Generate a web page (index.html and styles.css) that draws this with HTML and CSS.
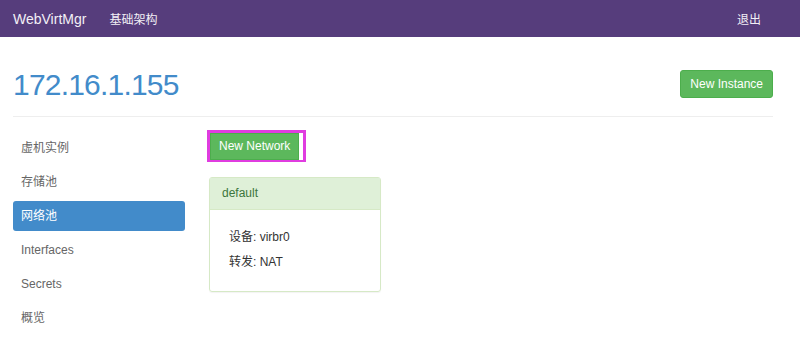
FILE: index.html
```html
<!DOCTYPE html>
<html lang="zh-CN">

<head>
    <meta charset="UTF-8">
    <meta name="viewport" content="width=device-width, initial-scale=1.0">
    <title>WebVirtMgr</title>
    <link rel="stylesheet" href="styles.css">
</head>

<body>
    <div class="navbar">
        <div class="navbar-inner">
            <a class="brand" href="javascript:;">WebVirtMgr</a>
            <a class="nav-link" href="javascript:;">基础架构</a>
            <a class="nav-link nav-right" href="javascript:;">退出</a>
        </div>
    </div>

    <div class="container">
        <div class="page-header">
            <h1>172.16.1.155</h1>
            <a class="btn btn-success" href="javascript:;">New Instance</a>
        </div>

        <div class="row">
            <ul class="side-nav">
                <li><a href="javascript:;">虚机实例</a></li>
                <li><a href="javascript:;">存储池</a></li>
                <li class="active"><a href="javascript:;">网络池</a></li>
                <li><a href="javascript:;">Interfaces</a></li>
                <li><a href="javascript:;">Secrets</a></li>
                <li><a href="javascript:;">概览</a></li>
            </ul>

            <div class="main">
                <div class="highlight">
                    <a class="btn btn-success btn-sm" href="javascript:;">New Network</a>
                </div>
                <div class="panel">
                    <div class="panel-heading">default</div>
                    <div class="panel-body">
                        <p>设备: virbr0</p>
                        <p>转发: NAT</p>
                    </div>
                </div>
            </div>
        </div>
    </div>
</body>

</html>
```

FILE: styles.css
```css
body {
    margin: 0;
    font-family: "Liberation Sans", Arial, "Noto Sans CJK SC", sans-serif;
    font-size: 12px;
    color: #333;
    background: #fff;
}

ul,
li,
p,
h1 {
    margin: 0;
    padding: 0;
}

a {
    text-decoration: none;
}

/* 顶部导航 */
.navbar {
    height: 37px;
    background: #563d7c;
}

.navbar-inner {
    display: flex;
    align-items: center;
    height: 100%;
    padding: 0 39px 0 13px;
    font-size: 14px;
}

.navbar-inner a {
    color: #f2eff6;
}

.brand {
    margin-right: 23px;
}

.nav-link {
    font-size: 12px;
}

.nav-right {
    margin-left: auto;
}

/* 内容区 */
.container {
    width: 760px;
    margin-left: 13px;
}

.page-header {
    display: flex;
    align-items: center;
    justify-content: space-between;
    height: 78px;
    margin-top: 1px;
    border-bottom: 1px solid #eeeeee;
}

.page-header h1 {
    font-size: 30px;
    font-weight: normal;
    letter-spacing: -0.8px;
    color: #428bca;
    margin-top: 15px;
}

.page-header .btn {
    height: 28px;
    line-height: 26px;
    padding: 0 9px;
    margin-top: 14px;
}

.btn {
    display: inline-block;
    box-sizing: border-box;
    border: 1px solid #4cae4c;
    border-radius: 3px;
    background: #5cb85c;
    color: #fff;
    font-size: 12px;
}

.btn-sm {
    height: 26px;
    line-height: 24px;
    padding: 0 8px;
    border-radius: 0;
}

.row {
    display: flex;
    gap: 22px;
    margin-top: 13px;
}

.side-nav {
    list-style: none;
    width: 172px;
    margin-top: 3px;
}

.side-nav li {
    margin-bottom: 4px;
}

.side-nav a {
    display: block;
    height: 30px;
    line-height: 30px;
    padding: 0 8px;
    border-radius: 3px;
    color: #666;
    font-size: 12px;
}

.side-nav .active a {
    background: #428bca;
    color: #fff;
}

.main {
    flex: 1;
}

.highlight {
    display: inline-flex;
    border: 3px solid #e03ce0;
    border-bottom-width: 2px;
    padding-right: 4px;
    height: 27px;
}

.highlight .btn {
    height: 27px;
    line-height: 25px;
    padding: 0 8px;
}

.panel {
    width: 172px;
    box-sizing: border-box;
    margin: 15px 0 0 2px;
    border: 1px solid #d6e9c6;
    border-radius: 3px;
    box-shadow: 0 1px 1px rgba(0, 0, 0, .05);
}

.panel-heading {
    height: 31px;
    line-height: 31px;
    padding: 0 12px;
    background: #dff0d8;
    border-bottom: 1px solid #d6e9c6;
    color: #3c763d;
    font-size: 12px;
}

.panel-body {
    padding: 15px 19px 16px;
}

.panel-body p {
    line-height: 25px;
    color: #333;
}
```
